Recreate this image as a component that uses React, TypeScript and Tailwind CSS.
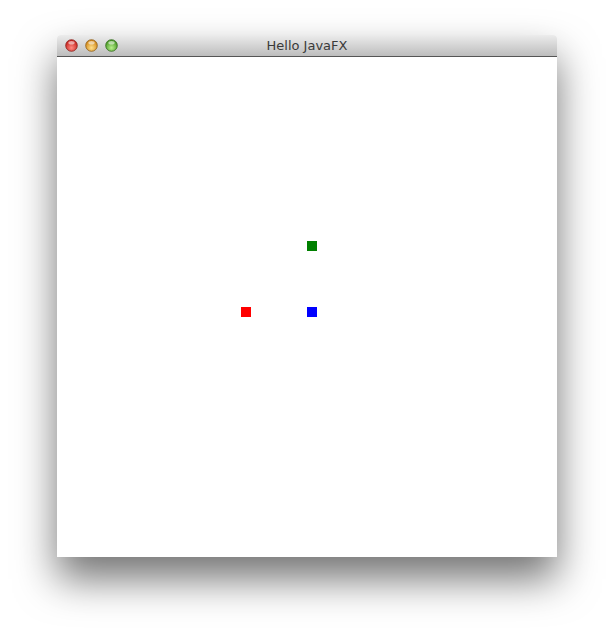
import React from "react";

function Light({ from, to, ring }: { from: string; to: string; ring: string }) {
  return (
    <svg width="13" height="13" viewBox="0 0 13 13" aria-hidden="true">
      <defs>
        <radialGradient id={`g${from}`} cx="50%" cy="70%" r="60%">
          <stop offset="0%" stopColor={to} />
          <stop offset="100%" stopColor={from} />
        </radialGradient>
      </defs>
      <circle cx="6.5" cy="6.5" r="5.8" fill={`url(#g${from})`} stroke={ring} strokeWidth="0.8" />
      <ellipse cx="6.5" cy="3.8" rx="3.2" ry="1.8" fill="rgba(255,255,255,0.55)" />
    </svg>
  );
}

const squares = [
  { x: 250, y: 184, c: "bg-[#008000]" },
  { x: 184, y: 250, c: "bg-[#ff0000]" },
  { x: 250, y: 250, c: "bg-[#0000ff]" },
];

export default function App() {
  return (
    <div className="w-[614px] h-[636px] bg-white pt-[35px] pl-[57px]">
      <div className="w-[500px] rounded-t-[4px] shadow-[0_22px_40px_rgba(0,0,0,0.55)]">
        <div className="relative h-[22px] rounded-t-[4px] border-b border-[#555] bg-gradient-to-b from-[#ececec] to-[#bdbdbd] flex items-center">
          <div className="flex items-center gap-[7px] pl-[8px]">
            <Light from="#c8241f" to="#ff8a80" ring="#8a1c17" />
            <Light from="#d2891a" to="#ffe08a" ring="#8f5c12" />
            <Light from="#4a9a26" to="#b8f08a" ring="#2f6a17" />
          </div>
          <div
            className="absolute inset-0 flex items-center justify-center text-[13px] text-[#3a3a3a]"
            style={{ fontFamily: "'Lucida Grande', 'DejaVu Sans', sans-serif" }}
          >
            Hello JavaFX
          </div>
        </div>
        <div className="relative h-[500px] bg-white">
          {squares.map((s, i) => (
            <div
              key={i}
              className={`absolute w-[10px] h-[10px] ${s.c}`}
              style={{ left: s.x, top: s.y }}
            />
          ))}
        </div>
      </div>
    </div>
  );
}
